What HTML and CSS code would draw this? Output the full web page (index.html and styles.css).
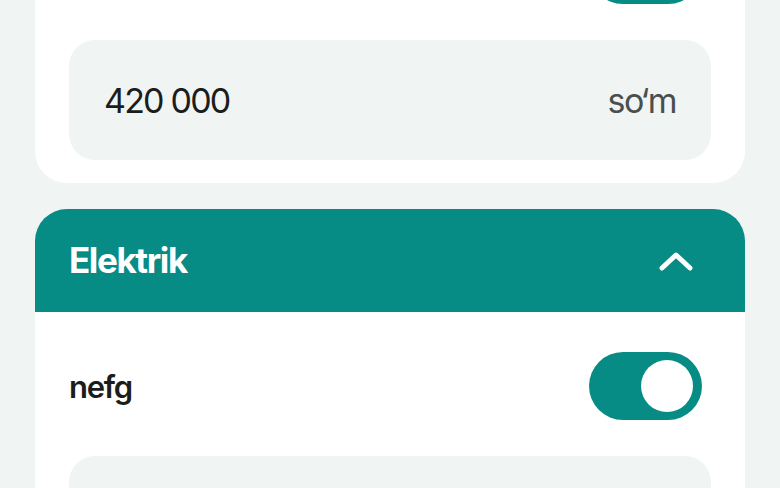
FILE: index.html
```html
<!DOCTYPE html>
<html lang="uz">
<head>
<meta charset="utf-8">
<link rel="stylesheet" href="styles.css">
</head>
<body>
<div class="page">
  <section class="card card-top">
    <div class="row row-cut">
      <span class="label"></span>
      <span class="toggle"><span class="knob"></span></span>
    </div>
    <div class="field">
      <span class="value">420 000</span>
      <span class="unit">so‘m</span>
    </div>
  </section>

  <section class="card card-group">
    <header class="group-head">
      <h2 class="group-title">Elektrik</h2>
      <svg class="chevron" width="40" height="24" viewBox="0 0 40 24">
        <polyline points="6,19 20,6 34,19" fill="none" stroke="#fff" stroke-width="5" stroke-linecap="round" stroke-linejoin="round"/>
      </svg>
    </header>
    <div class="group-body">
      <div class="row">
        <span class="label">nefg</span>
        <span class="toggle"><span class="knob"></span></span>
      </div>
      <div class="field"></div>
    </div>
  </section>
</div>
</body>
</html>
```

FILE: styles.css
```css
html, body {
  margin: 0;
  padding: 0;
}
body {
  width: 780px;
  height: 488px;
  overflow: hidden;
  background: #f0f4f3;
  font-family: Inter, "Noto Sans", sans-serif;
  color: #1b1d1d;
}
.page {
  padding: 0 35px;
}
.card {
  background: #fff;
}
.card-top {
  border-radius: 0 0 32px 32px;
  padding: 0 34px 23px;
  display: flex;
  flex-direction: column;
  gap: 36px;
}
.row {
  display: flex;
  align-items: center;
  justify-content: space-between;
  height: 68px;
}
.row-cut {
  margin-top: -64px;
}
.toggle {
  width: 113px;
  height: 68px;
  margin-right: 9px;
  border-radius: 34px;
  background: #078b85;
  display: flex;
  align-items: center;
  justify-content: flex-end;
  padding-right: 9px;
  box-sizing: border-box;
}
.knob {
  width: 52px;
  height: 52px;
  border-radius: 50%;
  background: #fff;
}
.field {
  height: 120px;
  border-radius: 26px;
  background: #f0f4f3;
  display: flex;
  align-items: center;
  justify-content: space-between;
  padding: 0 35px;
}
.value {
  font-size: 34px;
  letter-spacing: -1.8px;
  color: #1b1d1d;
}
.unit {
  font-size: 34px;
  letter-spacing: -1.6px;
  color: #4a4f4e;
}
.card-group {
  margin-top: 26px;
  border-radius: 32px 32px 0 0;
  overflow: hidden;
}
.group-head {
  height: 103px;
  background: #078b85;
  display: flex;
  align-items: center;
  justify-content: space-between;
  padding: 0 49px 0 34px;
}
.group-title {
  margin: 0;
  font-size: 35px;
  font-weight: 700;
  letter-spacing: -1.4px;
  color: #fff;
  padding-bottom: 2px;
}
.chevron {
  display: block;
}
.group-body {
  padding: 40px 34px 0;
  display: flex;
  flex-direction: column;
  gap: 36px;
}
.label {
  font-size: 31px;
  font-weight: 600;
  letter-spacing: -1.3px;
  color: #1b1d1d;
}
```
